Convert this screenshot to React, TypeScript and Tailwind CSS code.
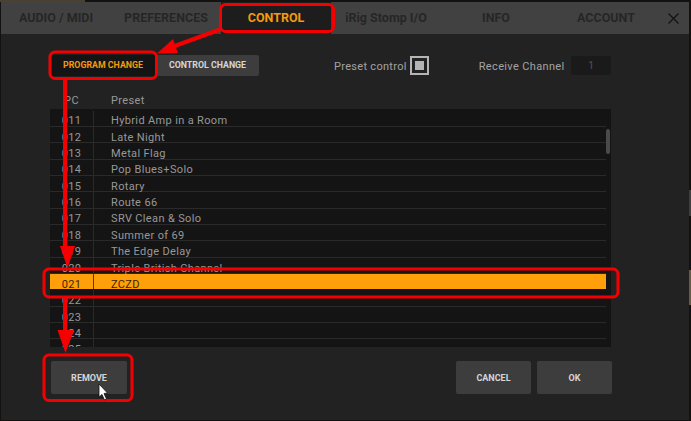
const tabs = ["AUDIO / MIDI", "PREFERENCES", "CONTROL", "iRig Stomp I/O", "INFO", "ACCOUNT"];

const rows = [
  ["011", "Hybrid Amp in a Room"],
  ["012", "Late Night"],
  ["013", "Metal Flag"],
  ["014", "Pop Blues+Solo"],
  ["015", "Rotary"],
  ["016", "Route 66"],
  ["017", "SRV Clean & Solo"],
  ["018", "Summer of 69"],
  ["019", "The Edge Delay"],
  ["020", "Triple British Channel"],
  ["021", "ZCZD"],
  ["022", ""],
  ["023", ""],
  ["024", ""],
  ["025", ""],
];

function Tab({ label }: { label: string }) {
  const active = label === "CONTROL";
  return (
    <div
      className={`flex h-full w-[110px] shrink-0 items-center justify-center text-[12.5px] font-bold ${
        active ? "bg-[#1d1d1d] text-[#f59a0e]" : "text-[#262626]"
      }`}
    >
      {label}
    </div>
  );
}

function Row({ pc, name }: { pc: string; name: string }) {
  const selected = pc === "021";
  return (
    <div
      className={`flex h-[16.35px] shrink-0 items-center border-b text-[11px] tracking-[0.35px] ${
        selected ? "border-[#151515] bg-[#ff9f0a] text-[#3b2503]" : "border-[#2a2a2a] text-[#989898]"
      }`}
    >
      <div
        className={`flex h-full w-[44px] shrink-0 items-center justify-center border-r pt-[7px] ${
          selected ? "border-[#5b3a05]" : "border-[#2a2a2a]"
        }`}
      >
        {pc}
      </div>
      <div className="flex h-full items-center pt-[7px] pl-[17px]">{name}</div>
    </div>
  );
}

function ActionButton({ label, wide }: { label: string; wide?: boolean }) {
  return (
    <div
      className={`flex h-[33px] items-center justify-center rounded-[2px] bg-[#3d3d3d] pt-[2px] text-[9px] font-bold text-[#d6d6d6] ${
        wide ? "w-[76px]" : "w-[75px]"
      }`}
    >
      {label}
    </div>
  );
}

function Annotations() {
  return (
    <svg className="pointer-events-none absolute inset-0" width={691} height={421} fill="none">
      <rect x={220.5} y={4.5} width={113} height={27} rx={5} stroke="#f50000" strokeWidth={3} />
      <rect x={50} y={52} width={106.5} height={26.5} rx={5} stroke="#f50000" strokeWidth={3} />
      <rect x={44} y={269} width={574} height={28} rx={5} stroke="#f50000" strokeWidth={3} />
      <rect x={44} y={355} width={88} height={45.5} rx={5} stroke="#f50000" strokeWidth={3} />
      <path d="M220 29.5 L172 47" stroke="#f50000" strokeWidth={4} />
      <path d="M157 53.5 L173 39 L178 53 Z" fill="#f50000" />
      <path d="M65 80 V250" stroke="#f50000" strokeWidth={4} />
      <path d="M60 246 H75 L67.5 268 Z" fill="#f50000" />
      <path d="M65 298 V335" stroke="#f50000" strokeWidth={4} />
      <path d="M57.5 330 H74 L65.5 353 Z" fill="#f50000" />
      <path
        d="M99 384 V397 L102 394.5 L104.5 400 L106.5 399 L104 393.5 L107.5 393 Z"
        fill="#ffffff"
        stroke="#111111"
        strokeWidth={0.8}
      />
    </svg>
  );
}

export default function App() {
  return (
    <div className="relative h-[421px] w-[691px] overflow-hidden bg-[#141210] pt-[2px] pl-px font-['Roboto',sans-serif]">
      {/* bits of the app behind the dialog */}
      <div className="absolute top-0 left-0 h-[2px] w-[85px] bg-[#4a4130]" />
      <div className="absolute top-[270px] right-0 h-[35px] w-[2px] bg-[#6b5a42]" />
      <div className="absolute top-[190px] right-0 h-[26px] w-[2px] bg-[#3e3e3e]" />

      <div className="relative flex h-[418px] w-[688px] flex-col bg-[#222222]">
        <div className="flex h-[32px] shrink-0 items-center bg-[#414141]">
          {tabs.map((t) => (
            <Tab key={t} label={t} />
          ))}
          <svg className="ml-[7px] h-[11px] w-[11px] text-[#141414]" viewBox="0 0 11 11" fill="none" stroke="currentColor" strokeWidth={1.4}>
            <path d="M0.5 0.5 L10.5 10.5 M10.5 0.5 L0.5 10.5" />
          </svg>
        </div>

        <div className="mt-[21px] ml-[49px] flex h-[21px] w-[561px] shrink-0 items-center">
          <div className="flex h-full w-[108px] items-center justify-center bg-[#141414] pr-[2px] text-[8.8px] font-bold text-[#f59a0e]">
            PROGRAM CHANGE
          </div>
          <div className="flex h-full w-[101px] items-center justify-center rounded-r-[2px] bg-[#3d3d3d] pr-[2px] text-[8.8px] font-bold text-[#d6d6d6]">
            CONTROL CHANGE
          </div>
          <div className="ml-[75px] pt-[3px] text-[11px] tracking-[0.3px] text-[#a3a3a3]">Preset control</div>
          <div className="ml-[3px] flex h-[19px] w-[19px] items-center justify-center border-2 border-[#b5b5b5] bg-[#222222]">
            <div className="h-[9px] w-[9px] bg-[#b5b5b5]" />
          </div>
          <div className="ml-[50px] pt-[3px] text-[11px] tracking-[0.35px] text-[#a3a3a3]">Receive Channel</div>
          <div className="ml-auto flex h-[19px] w-[40px] items-center justify-center rounded-[2px] bg-[#1a1a1a] pt-[2px] text-[11px] text-[#4e4e4e]">
            1
          </div>
        </div>

        <div className="mt-[16px] ml-[49px] flex h-[17px] w-[561px] shrink-0 items-center pt-[2px] text-[11px] tracking-[0.35px] text-[#989898]">
          <div className="w-[44px] pr-[1px] text-center">PC</div>
          <div className="pl-[17px]">Preset</div>
        </div>

        <div className="relative ml-[49px] flex h-[238px] w-[561px] shrink-0 flex-col overflow-hidden bg-[#141414] pt-[1.5px] pr-[5px]">
          {rows.map(([pc, name]) => (
            <Row key={pc} pc={pc} name={name} />
          ))}
          <div className="absolute top-[20px] right-[1px] h-[25px] w-[4px] rounded-full bg-[#4a4a4a]" />
        </div>

        <div className="mt-[14px] ml-[50px] flex w-[561px] items-center">
          <ActionButton label="REMOVE" wide />
          <div className="ml-auto flex gap-[6px]">
            <ActionButton label="CANCEL" />
            <ActionButton label="OK" />
          </div>
        </div>
      </div>
      <Annotations />
    </div>
  );
}
